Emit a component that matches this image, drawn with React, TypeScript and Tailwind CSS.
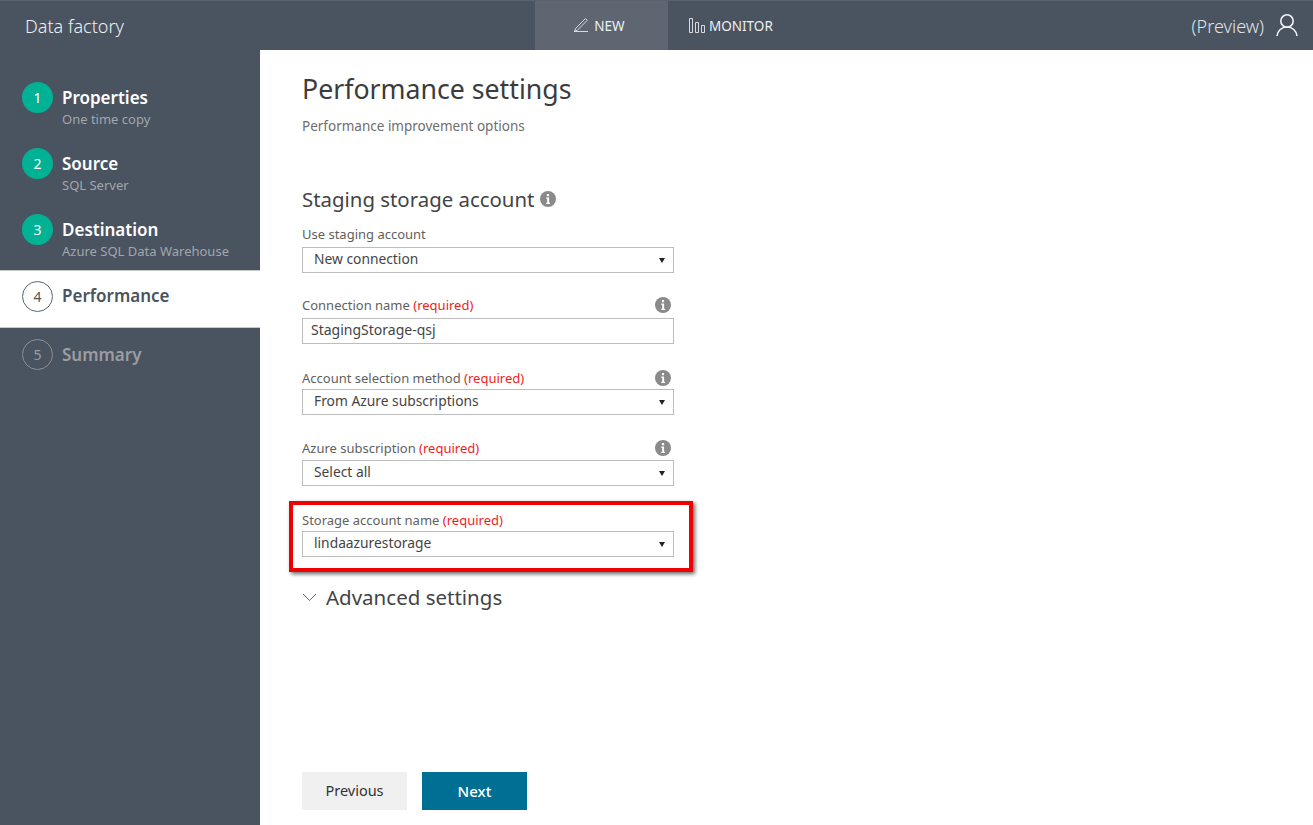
import React from 'react';

const font = "font-['Noto_Sans','Open_Sans',sans-serif]";

const InfoIcon = ({ size = 16 }: { size?: number }) => (
  <svg width={size} height={size} viewBox="0 0 16 16" className="shrink-0">
    <circle cx="8" cy="8" r="8" fill="#8a8a8a" />
    <rect x="6.9" y="3" width="2.2" height="2.2" fill="#fff" />
    <path d="M6.2 6.6h2.9v5.2h1v1.2H6.2v-1.2h1V7.8h-1z" fill="#fff" />
  </svg>
);

const Required = () => <span className="text-[#f01c1c]">(required)</span>;

const Label = ({ text, required, info }: { text: string; required?: boolean; info?: boolean }) => (
  <div className="flex h-[16px] items-center justify-between pr-[3px] text-[13px] leading-[16px] text-[#5f5f5f]">
    <span>
      {text} {required && <Required />}
    </span>
    {info && <InfoIcon />}
  </div>
);

const Select = ({ value }: { value: string }) => (
  <div className="flex h-[26px] w-[372px] items-center justify-between border border-[#bdbdbd] pl-[11px] pr-[8px] text-[13.8px] text-[#444]">
    <span className="-mt-[1px]">{value}</span>
    <span className="h-0 w-0 border-x-[3px] border-t-[5px] border-x-transparent border-t-[#222]" />
  </div>
);

const steps = [
  { n: 1, title: 'Properties', sub: 'One time copy' },
  { n: 2, title: 'Source', sub: 'SQL Server' },
  { n: 3, title: 'Destination', sub: 'Azure SQL Data Warehouse' },
];

const Sidebar = () => (
  <aside className="flex w-[260px] shrink-0 flex-col bg-[#4a5360] pt-[32px]">
    {steps.map(s => (
      <div key={s.n} className="flex h-[66px] gap-[9px] pl-[22px]">
        <div className="flex h-[31px] w-[31px] items-center justify-center rounded-full bg-[#00b294] text-[14px] text-white">
          {s.n}
        </div>
        <div className="-mt-[1px]">
          <div className="text-[17px] leading-[33px] font-semibold text-white">{s.title}</div>
          <div className="-mt-[4px] text-[13px] leading-[18px] text-[#a3a6ab]">{s.sub}</div>
        </div>
      </div>
    ))}
    <div className="-mt-[10px] flex h-[58px] items-center gap-[9px] border-y border-[#c8c8c8] bg-white pb-[6px] pl-[22px]">
      <div className="flex h-[31px] w-[31px] items-center justify-center rounded-full border border-[#5a6470] text-[14px] text-[#555]">
        4
      </div>
      <span className="text-[17px] font-semibold text-[#4a5360]">Performance</span>
    </div>
    <div className="mt-[11px] flex items-center gap-[9px] pl-[22px]">
      <div className="flex h-[31px] w-[31px] items-center justify-center rounded-full border border-[#8a8f96] text-[14px] text-[#9a9da2]">
        5
      </div>
      <span className="text-[17px] font-semibold text-[#9a9da2]">Summary</span>
    </div>
  </aside>
);

const Header = () => (
  <header className="flex h-[50px] items-stretch border-t border-[#5a626e] bg-[#4a5360] text-white">
    <div className="flex w-[535px] items-center pt-[1px] pl-[25px] text-[18px] font-light text-[#eef0f2]">Data factory</div>
    <div className="flex w-[133px] items-center justify-center gap-[5px] bg-[#5d6671] pt-[2px] pr-[5px] text-[13.5px] text-[#eef0f2]">
      <svg width="16" height="16" viewBox="0 0 16 16" fill="none" stroke="#d8dade" strokeWidth="1" className="-mt-[3px]">
        <path d="M1 14.5h14M2.5 11.5 12.5 1.5l1.8 1.8-10 10-2.6.6z" />
      </svg>
      NEW
    </div>
    <div className="flex items-center gap-[4px] pt-[2px] pl-[21px] text-[13.5px] text-[#eef0f2]">
      <svg width="16" height="15" viewBox="0 0 16 15" fill="none" stroke="#d8dade" strokeWidth="1" className="-mt-[3px]">
        <path d="M.5.5h3v14h-3zM6.5 4.5h3v10h-3zM12.5 7.5h3v7h-3z" />
      </svg>
      MONITOR
    </div>
    <div className="ml-auto flex items-center gap-[12px] pt-[2px] pr-[15px] text-[18px] font-light text-[#dfe3e8]">
      (Preview)
      <svg width="22" height="24" viewBox="0 0 22 24" fill="none" stroke="#f2f3f4" strokeWidth="1.6" className="-mt-[3px]">
        <circle cx="11" cy="8" r="6.2" />
        <path d="M1 23c.6-5.4 4.6-9 10-9s9.4 3.6 10 9" />
      </svg>
    </div>
  </header>
);

export default function App() {
  return (
    <div className={`flex h-[825px] w-[1313px] flex-col overflow-hidden bg-white ${font}`}>
      <Header />
      <div className="flex min-h-0 flex-1">
        <Sidebar />
        <main className="flex flex-1 flex-col pl-[42px]">
          <h1 className="mt-[19px] text-[26.7px] leading-[40px] font-normal text-[#3c3c3c]">Performance settings</h1>
          <p className="mt-[8px] text-[13.5px] leading-[18px] text-[#6e6e6e]">Performance improvement options</p>

          <div className="mt-[49px] flex h-[30px] items-center gap-[6px] text-[20.4px] text-[#444]">
            Staging storage account <InfoIcon />
          </div>

          <div className="w-[372px]">
            <div className="mt-[12px]">
              <Label text="Use staging account" />
              <div className="mt-[5px]"><Select value="New connection" /></div>
            </div>
            <div className="mt-[24px]">
              <Label text="Connection name" required info />
              <div className="mt-[5px] flex h-[26px] items-center border border-[#bdbdbd] pb-[3px] pl-[8px] text-[14px] text-[#444]">
                StagingStorage-qsj
              </div>
            </div>
            <div className="mt-[26px]">
              <Label text="Account selection method" required info />
              <div className="mt-[3px]"><Select value="From Azure subscriptions" /></div>
            </div>
            <div className="mt-[25px]">
              <Label text="Azure subscription" required info />
              <div className="mt-[4px]"><Select value="Select all" /></div>
            </div>
            <div className="mt-[15px] -ml-[13px] w-[404px] border-4 border-[#f00000] pt-[7px] pb-[11px] pl-[9px] shadow-[2px_2px_4px_rgba(0,0,0,0.6)]">
              <Label text="Storage account name" required />
              <div className="mt-[3px]"><Select value="lindaazurestorage" /></div>
            </div>
          </div>

          <div className="mt-[10px] flex h-[30px] items-center gap-[9px] text-[20.5px] text-[#444]">
            <svg width="15" height="9" viewBox="0 0 15 9" fill="none" stroke="#666" strokeWidth="1">
              <path d="M1 1l6.5 6.5L14 1" />
            </svg>
            Advanced settings
          </div>

          <div className="mt-auto mb-[15px] flex gap-[15px] text-[14.5px]">
            <button className="h-[38px] w-[105px] bg-[#f0f0f0] text-[#333]">Previous</button>
            <button className="h-[38px] w-[105px] bg-[#006f94] text-[15px] font-medium text-white">Next</button>
          </div>
        </main>
      </div>
    </div>
  );
}
